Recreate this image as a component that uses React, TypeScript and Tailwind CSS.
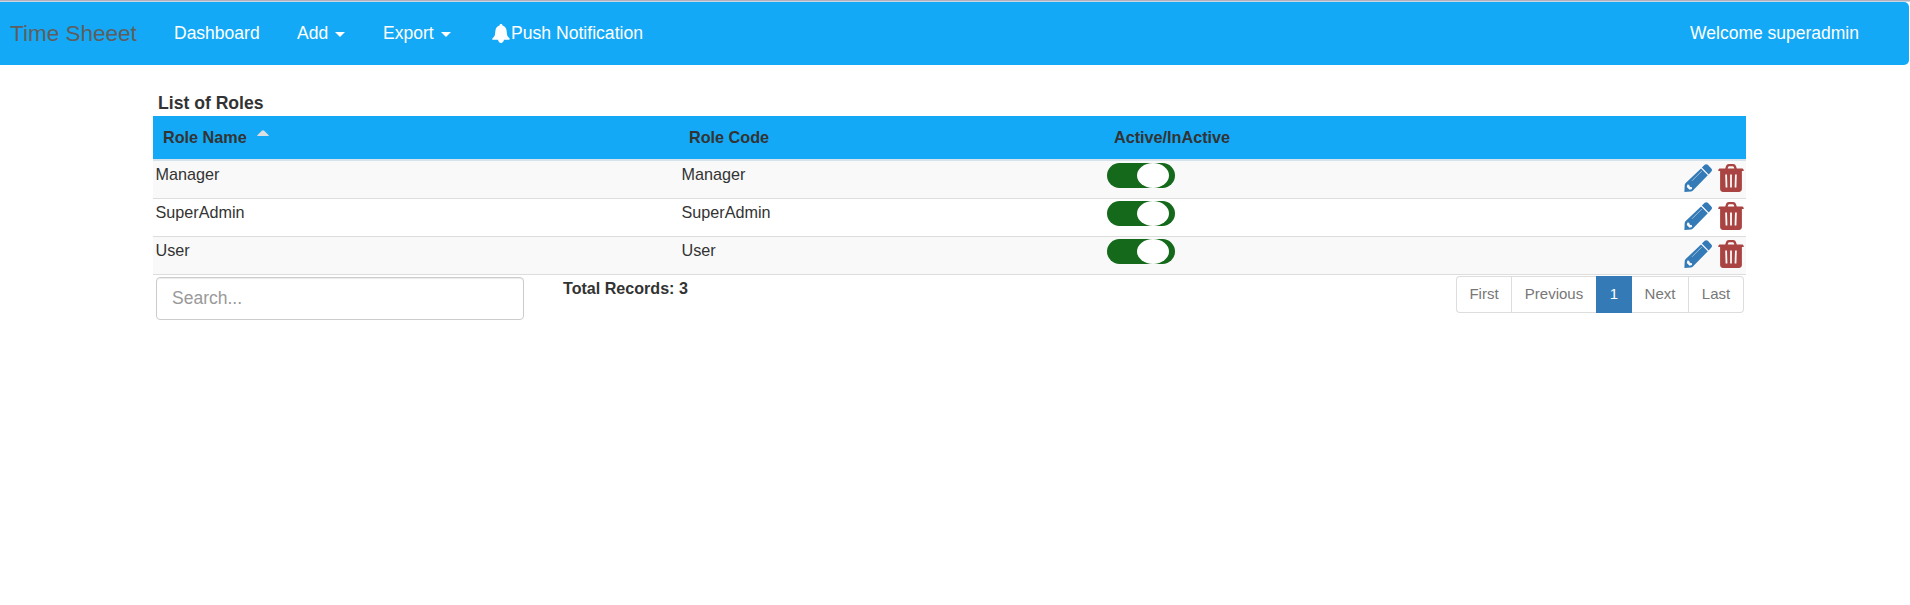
const COLS = 'grid grid-cols-[526px_425px_1fr_auto]';

const roles = [
  { name: 'Manager', code: 'Manager' },
  { name: 'SuperAdmin', code: 'SuperAdmin' },
  { name: 'User', code: 'User' },
];

function Caret() {
  return (
    <svg className="mt-px ml-[7px] h-[5px] w-[10px]" viewBox="0 0 10 5" fill="currentColor">
      <path d="M0 0h10L5 5z" />
    </svg>
  );
}

function Bell() {
  return (
    <svg className="h-[19px] w-[18px]" viewBox="0 0 18 19" fill="currentColor">
      <path d="M9 0c.9 0 1.500.7 1.500 1.500 2.500.8 3.900 2.600 4.100 5.200l.4 3.600c.2 1.500.8 2.500 2 3.500l.6.600c.4.600.1 1.300-.7 1.300H12c-.3 1.900-1.400 3.200-3 3.200s-2.700-1.300-3-3.200H1.100c-.8 0-1.100-.7-.7-1.300l.6-.6c1.200-1 1.800-2 2-3.500l.4-3.600c.2-2.600 1.600-4.400 4.100-5.200C7.500.7 8.100 0 9 0z" />
    </svg>
  );
}

function Pencil() {
  return (
    <svg className="h-[28px] w-[28px]" viewBox="0 0 28 28">
      <path
        fill="#337ab7"
        d="M17.900 3.600 20.700.8c.9-.8 2.200-.8 3.100 0l3.500 3.700c.9.900.9 2.200.1 3.100l-2.700 2.800zM17 4.500l6.800 6.800L8.900 26.500c-.6.600-1.200.9-2 1L.4 27.900l.3-6.800c.1-.8.4-1.500 1-2.100z"
      />
      <path fill="none" stroke="#b9d0e4" strokeWidth=".8" d="M8 16.800 17.800 7" />
      <path fill="#f9f9f9" d="m3.400 20.500 1.700.3.800 1.900 2 .6.200 1.700-2.600.8-2.700-2.700z" />
    </svg>
  );
}

function Trash() {
  return (
    <svg className="h-[28px] w-[26px]" viewBox="0 0 26 28">
      <path
        fill="#a94442"
        fillRule="evenodd"
        d="M7.200 4.500 8 2.200C8.500.7 9.400 0 10.800 0h4.400c1.400 0 2.300.7 2.800 2.200l.8 2.300h5.100c.9 0 1.400.4 1.600 1.100l.3 1.400H.2l.3-1.400c.2-.7.700-1.100 1.600-1.100zM9.700 4.500h6.600l-.5-1.400c-.2-.6-.5-.8-1.100-.8h-3.400c-.6 0-.9.2-1.100.8zM2.100 7h21.800v18.100c0 1.700-1.200 2.900-2.900 2.900H5c-1.700 0-2.900-1.200-2.900-2.900zM7.200 10.500l.4 13.100h1.800L9 10.500zM12.100 10.500v13.100h1.800V10.500zM17 10.500l-.4 13.100h1.800l.4-13.100z"
      />
    </svg>
  );
}

function Toggle() {
  return (
    <span className="flex h-[25px] w-[68px] justify-end rounded-full bg-[#14691a] pr-[6px]">
      <span className="h-[25px] w-8 rounded-[50%] bg-white" />
    </span>
  );
}

export default function App() {
  return (
    <div className="min-h-[605px] bg-white font-['Liberation_Sans',Arial,sans-serif] text-base leading-[23px] text-[#333]">
      <div className="h-[2px] border-b border-[#c9d5e2] bg-[#b5b0ba]" />
      <nav className="mr-[1px] flex h-[63px] items-center rounded-r-[5px] bg-[#14a9f6] pr-[50px] pl-[10px] text-[17.5px] text-white">
        <span className="w-[164px] text-[22.5px] text-[#5e5e5e]">Time Sheeet</span>
        <span className="w-[123px]">Dashboard</span>
        <span className="flex w-[86px] items-center">Add<Caret /></span>
        <span className="flex w-[109px] items-center">Export<Caret /></span>
        <span className="flex items-center"><Bell /><span className="ml-[1px] text-[17.6px]">Push Notification</span></span>
        <span className="ml-auto">Welcome superadmin</span>
      </nav>

      <main className="ml-[153px] w-[1593px] pt-[26px]">
        <h1 className="h-[25px] pl-[5px] text-[17.6px] leading-6 font-bold">List of Roles</h1>
        <div className={`${COLS} h-[45px] items-center border-b-2 border-[#d5e3ec] bg-[#14a9f6] text-[16.2px] font-bold`}>
          <span className="flex items-center pl-[10px]">
            Role Name
            <svg className="mb-[9px] ml-[10px] h-[6px] w-3" viewBox="0 0 12 6" fill="#dcdedf">
              <path d="M.3 6Q0 5.300.8 4.700L4.800.7Q6-.4 7.200.7l4 4Q12 5.300 11.700 6z" />
            </svg>
          </span>
          <span className="pl-[10px]">Role Code</span>
          <span className="pl-[10px]">Active/InActive</span>
        </div>
        <div>
          {roles.map((role) => (
            <div
              key={role.name}
              className={`${COLS} h-[38px] border-b border-[#ddd] pt-[2px] text-[16.2px] odd:bg-[#f9f9f9] even:bg-white`}
            >
              <span className="pl-[2.500px]">{role.name}</span>
              <span className="pl-[2.500px]">{role.code}</span>
              <span className="pl-[3px]"><Toggle /></span>
              <span className="flex gap-[6px] pt-[1px] pr-[2px]"><Pencil /><Trash /></span>
            </div>
          ))}
        </div>
        <div className="flex items-start">
          <input
            className="mt-[2px] ml-[3px] h-[43px] w-[368px] rounded-[4px] border border-[#ccc] px-[15px] text-[17.5px] shadow-[inset_0_1px_1px_rgba(0,0,0,0.075)] placeholder:text-[#999]"
            placeholder="Search..."
          />
          <span className="mt-[2px] ml-[39px] text-[16.1px] font-bold">Total Records: 3</span>
          <div className="mt-[1px] mr-[2px] ml-auto flex h-[37px] rounded-[4px] text-center text-[15px] leading-[34px] text-[#777]">
            <span className="w-[55px] rounded-l-[4px] border border-r-0 border-[#ddd]">First</span>
            <span className="w-[85px] border border-r-0 border-[#ddd]">Previous</span>
            <span className="w-[36px] border border-[#337ab7] bg-[#337ab7] text-white">1</span>
            <span className="w-[57px] border border-l-0 border-[#ddd]">Next</span>
            <span className="w-[55px] rounded-r-[4px] border border-l-0 border-[#ddd]">Last</span>
          </div>
        </div>
      </main>
    </div>
  );
}
